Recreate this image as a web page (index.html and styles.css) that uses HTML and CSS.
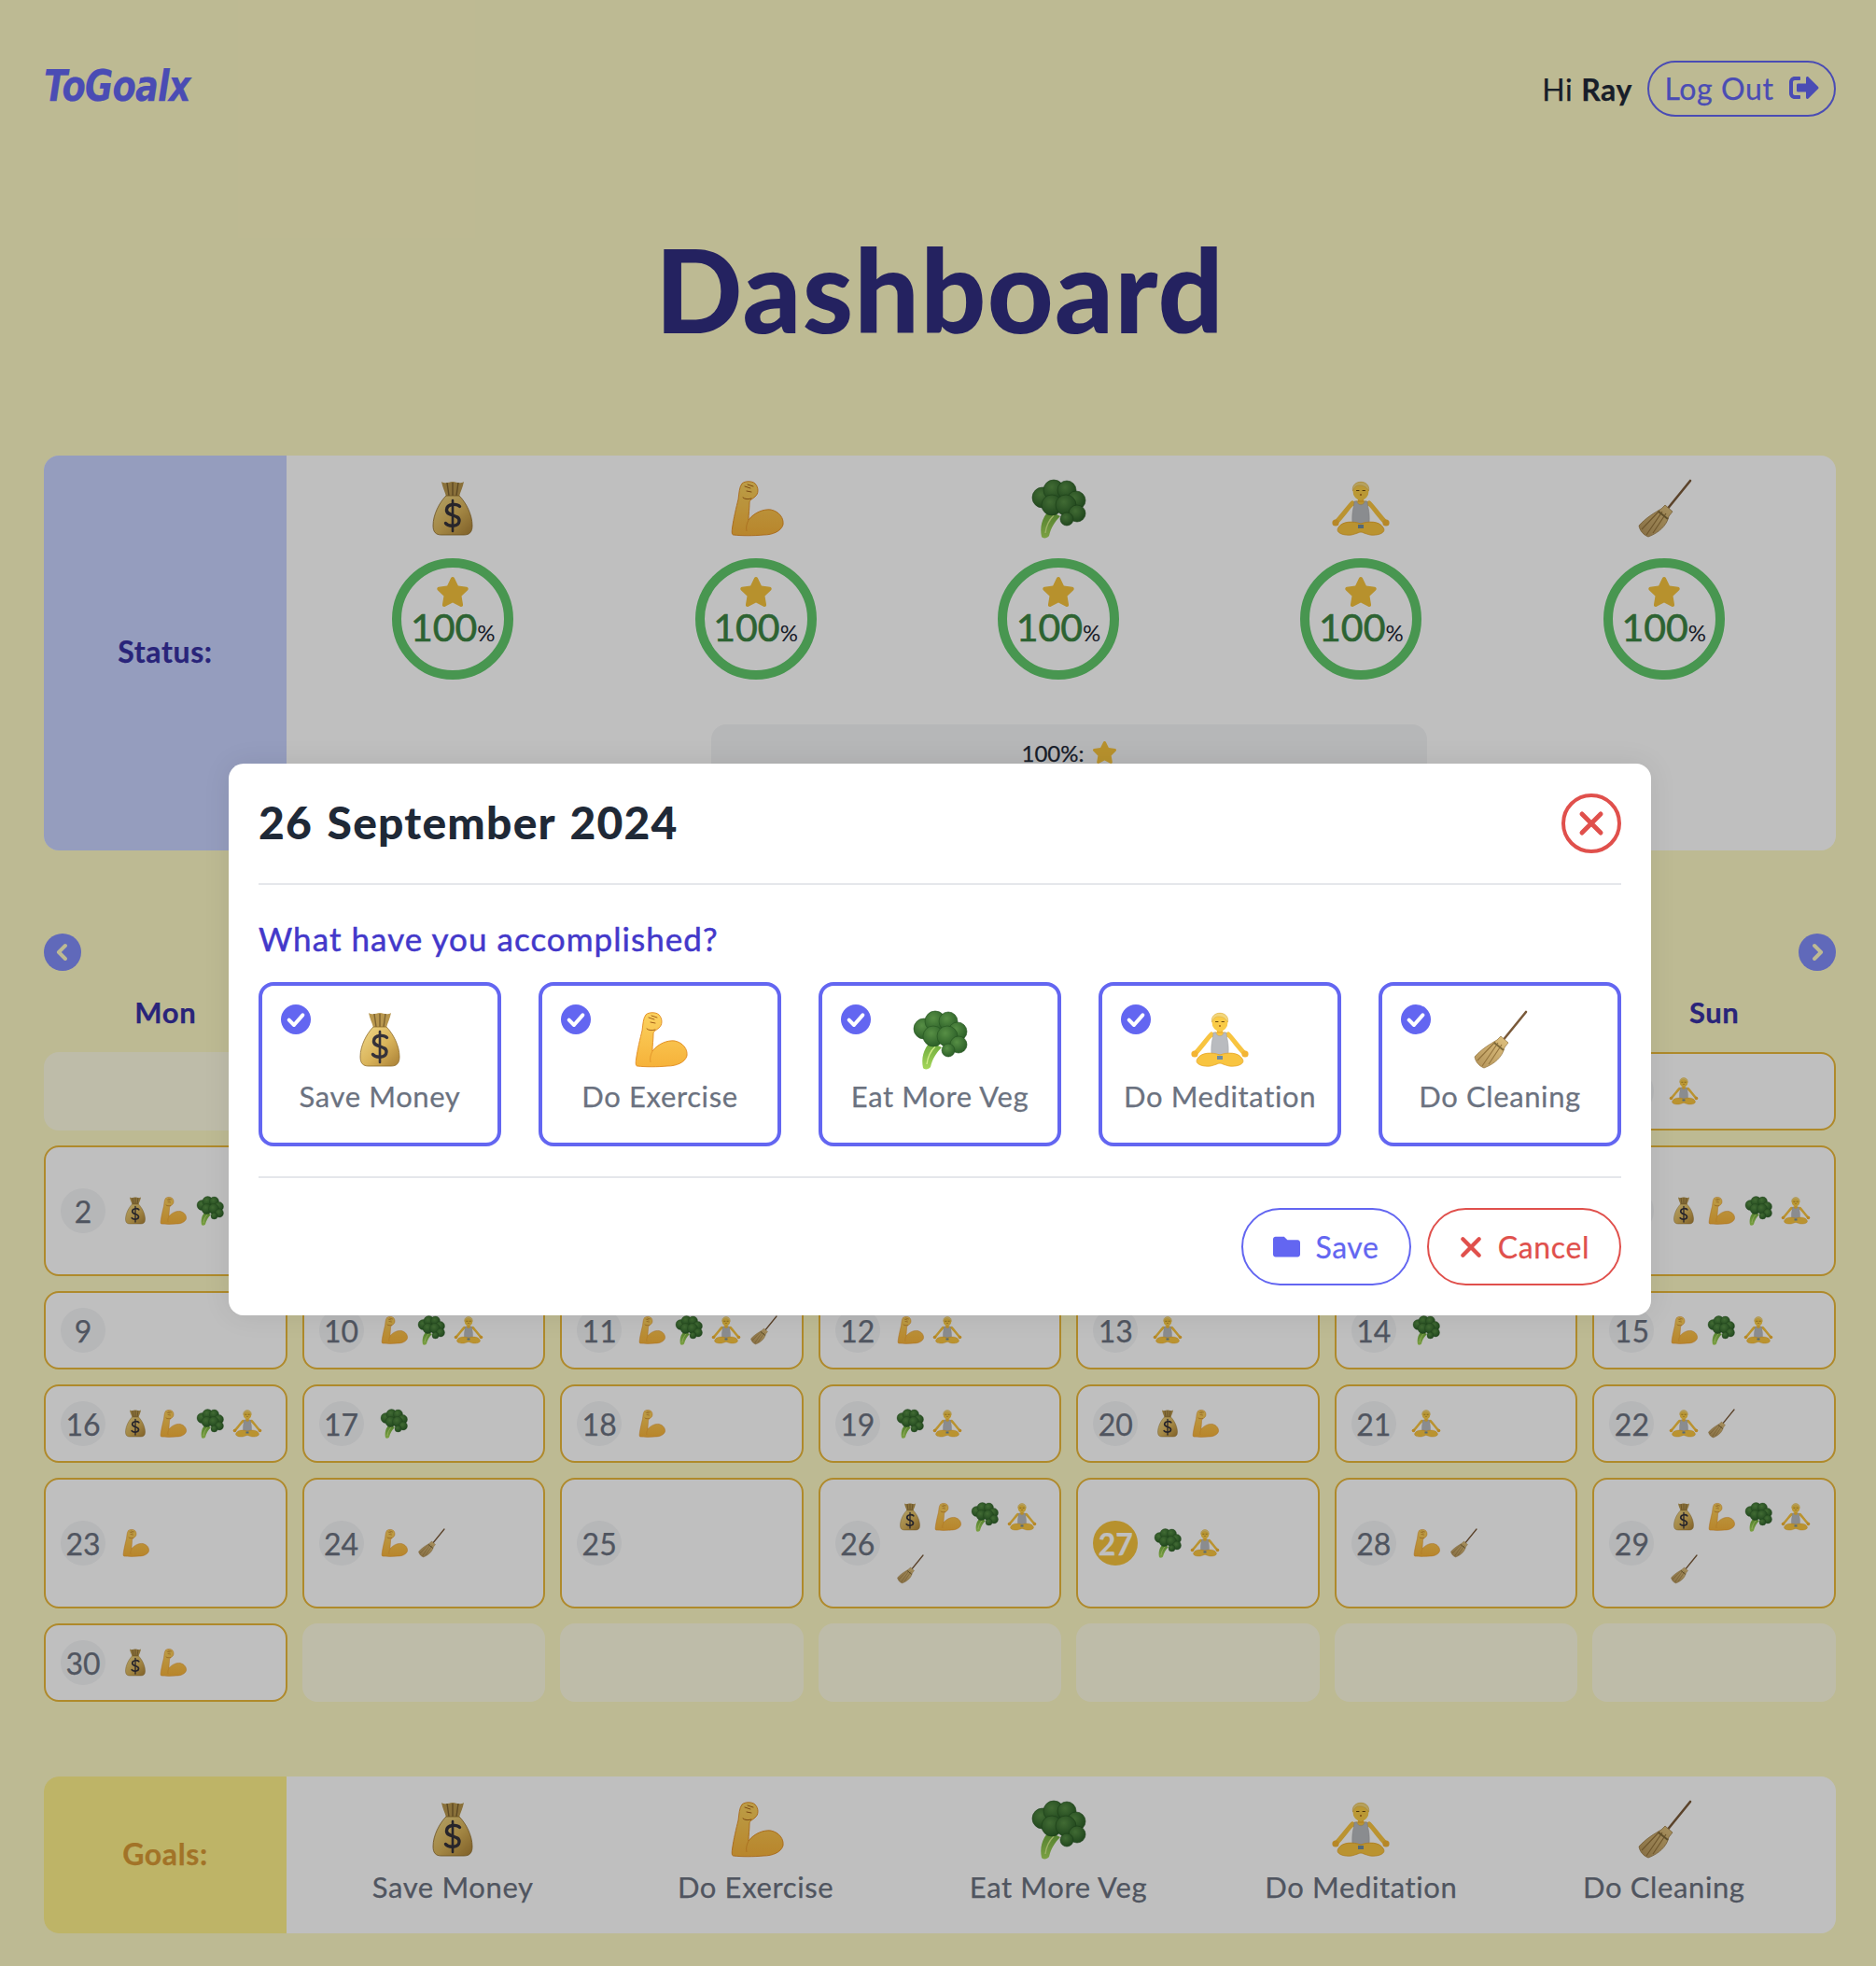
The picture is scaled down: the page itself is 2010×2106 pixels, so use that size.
FILE: index.html
```html
<!DOCTYPE html>
<html>
	<head>
		<meta charset="utf-8" />
		<title>ToGoalx</title>
		<link rel="stylesheet" href="styles.css">
	</head>
	<body>
		<svg class="defs" width="0" height="0">
			<defs>
				<linearGradient id="gBag" x1="0" y1="0" x2="1" y2="1">
					<stop offset="0" stop-color="#f0d98a"/>
					<stop offset="0.55" stop-color="#d9b35a"/>
					<stop offset="1" stop-color="#a87f35"/>
				</linearGradient>
				<linearGradient id="gArm" x1="0" y1="0" x2="0" y2="1">
					<stop offset="0" stop-color="#fbd25f"/>
					<stop offset="1" stop-color="#f6b23a"/>
				</linearGradient>
				<radialGradient id="gFloret" cx="0.4" cy="0.35" r="0.7">
					<stop offset="0" stop-color="#578f45"/>
					<stop offset="1" stop-color="#295c26"/>
				</radialGradient>
				<linearGradient id="gStem" x1="0" y1="0" x2="0" y2="1">
					<stop offset="0" stop-color="#6aa83c"/>
					<stop offset="1" stop-color="#a6d75a"/>
				</linearGradient>
				<linearGradient id="gBroom" x1="1" y1="0" x2="0" y2="1">
					<stop offset="0" stop-color="#e0c27f"/>
					<stop offset="1" stop-color="#b3935a"/>
				</linearGradient>
			</defs>
			<symbol id="e-bag" viewBox="0 0 64 64">
				<path d="M20 3 C25 6 28 3 32 3 C36 3 39 6 44 3 C43 9 40 14 39 19 L25 19 C24 14 21 9 20 3Z" fill="#b8974e"/>
				<path d="M26 4 L28 18 M32 4 L32 18 M38 4 L36 18" stroke="#7d6230" stroke-width="1.4" fill="none"/>
				<path d="M25 18 L39 18 C46 25 53 38 53 50 C53 57 50 60 44 60 L20 60 C14 60 11 57 11 50 C11 38 18 25 25 18Z" fill="url(#gBag)" stroke="#8e6c2c" stroke-width="0.8"/>
				<path d="M39.5 29.5 C37 26.5 26 26 25.5 33 C25 40.5 39.5 37.5 39 45 C38.5 52 27 51 24.5 47.5" fill="none" stroke="#35323a" stroke-width="3.4" stroke-linecap="round"/>
				<path d="M32 23 L32 56" stroke="#35323a" stroke-width="2.6" stroke-linecap="round"/>
			</symbol>
			<symbol id="e-arm" viewBox="0 0 64 64">
				<path d="M17 5 C20 2 28 2 31 5 C35 9 35 16 31 19 C28 22 25 22 25 26 C25 31 24 38 24 44 C30 36 40 32 48 33 C57 35 62 42 61 49 C59 56 50 60 40 60 C30 61 16 61 8 60 C6 60 6 57 6.5 53 C8 42 11 30 13 22 C14 15 14 9 17 5Z" fill="url(#gArm)" stroke="#e08a1e" stroke-width="0.9"/>
				<path d="M20 8 L26 10 M23 6 L29 8 M22 13 L27 14 M18 20 C20 22 24 22 27 21" stroke="#a5611a" stroke-width="1" fill="none" stroke-linecap="round"/>
				<path d="M24 44 C22 48 21 52 22 56" stroke="#e5992c" stroke-width="1" fill="none"/>
			</symbol>
			<symbol id="e-veg" viewBox="0 0 64 64">
				<path d="M14 62 C12 52 14 42 22 34 L34 40 C28 46 24 52 22 61 C20 64 15 64 14 62Z" fill="url(#gStem)"/>
				<path d="M18 58 C19 50 22 44 27 39" stroke="#d2ec8a" stroke-width="1.4" fill="none"/>
				<circle cx="33" cy="22" r="14" fill="#295c26"/>
				<circle cx="15" cy="20" r="11" fill="url(#gFloret)" stroke="#24521f" stroke-width="0.6"/>
				<circle cx="27" cy="12" r="11" fill="url(#gFloret)" stroke="#24521f" stroke-width="0.6"/>
				<circle cx="41" cy="12" r="10" fill="url(#gFloret)" stroke="#24521f" stroke-width="0.6"/>
				<circle cx="51" cy="23" r="10" fill="url(#gFloret)" stroke="#24521f" stroke-width="0.6"/>
				<circle cx="25" cy="28" r="11" fill="url(#gFloret)" stroke="#24521f" stroke-width="0.6"/>
				<circle cx="40" cy="28" r="11" fill="url(#gFloret)" stroke="#24521f" stroke-width="0.6"/>
				<circle cx="52" cy="37" r="9" fill="url(#gFloret)" stroke="#24521f" stroke-width="0.6"/>
				<circle cx="41" cy="43" r="7" fill="url(#gFloret)" stroke="#24521f" stroke-width="0.6"/>
			</symbol>
			<symbol id="e-yoga" viewBox="0 0 64 64">
				<path d="M23 26 C18 31 12 40 6 46 M41 26 C46 31 52 40 58 46" fill="none" stroke="#f8c440" stroke-width="5" stroke-linecap="round"/>
				<circle cx="5" cy="47" r="3.6" fill="#f3b433"/>
				<circle cx="59" cy="47" r="3.6" fill="#f3b433"/>
				<path d="M22 28 C22 24 28 23 32 23 C36 23 42 24 42 28 L32 32Z" fill="#f8c440"/>
				<path d="M25 24 L28 24 C28 29 36 29 36 24 L39 24 C39 30 42 34 41 48 L23 48 C22 34 25 30 25 24Z" fill="#b9bbbf" stroke="#9c9ea3" stroke-width="0.5"/>
				<path d="M8 52 C12 45 24 45 32 48 C40 45 52 45 56 52 C60 58 50 61 42 60 C37 59 34 57 32 57 C30 57 27 59 22 60 C14 61 4 58 8 52Z" fill="#f8c440" stroke="#e3a022" stroke-width="0.7"/>
				<rect x="29" y="49" width="6" height="4" fill="#6f8ba0"/>
				<rect x="29" y="18" width="6" height="7" fill="#f3b433"/>
				<ellipse cx="32" cy="13" rx="8.5" ry="10" fill="#f9cb47"/>
				<path d="M23.5 13 C21 0 43 0 40.5 13 C38 8 34 7 30 7 C27 7 25 9 23.5 13Z" fill="#f3d77c" stroke="#dcb04a" stroke-width="0.6"/>
				<path d="M27.5 12.5 L30 12.5 M34 12.5 L36.5 12.5" stroke="#6a4a12" stroke-width="1" stroke-linecap="round"/>
				<circle cx="32" cy="17" r="1" fill="#a5611a"/>
			</symbol>
			<symbol id="e-broom" viewBox="0 0 64 64">
				<path d="M60 2 L34 34" stroke="#7a5a3a" stroke-width="2.6" stroke-linecap="round"/>
				<path d="M33 28 L41 35 L37 40 C35 50 26 58 15 62 C10 60 6 56 5 50 C12 42 22 36 29 32Z" fill="url(#gBroom)" stroke="#94743f" stroke-width="0.7"/>
				<path d="M30 35 L13 60 M34 37 L20 58 M27 34 L8 54" stroke="#93733c" stroke-width="1.1"/>
				<path d="M26 35 L36 43" stroke="#7f6a3a" stroke-width="2"/>
			</symbol>
			<symbol id="i-star" viewBox="0 0 576 512">
				<path d="M259.3 17.8L194 150.2 47.9 171.5c-26.2 3.8-36.7 36.1-17.7 54.6l105.7 103-25 145.5c-4.5 26.3 23.2 46 46.4 33.7L288 439.6l130.7 68.7c23.2 12.2 50.9-7.4 46.4-33.7l-25-145.5 105.7-103c19-18.5 8.5-50.8-17.7-54.6L382 150.2 316.7 17.8c-11.7-23.6-45.6-23.9-57.4 0z"/>
			</symbol>
		</svg>

		<div class="page">
			<header class="top">
				<div class="logo">ToGoalx</div>
				<div class="user">
					<span class="hi">Hi <b>Ray</b></span>
					<a class="btn-logout">Log Out
						<svg viewBox="0 0 512 512"><path d="M497 273L329 441c-15 15-41 4.5-41-17v-96H152c-13.3 0-24-10.7-24-24v-96c0-13.3 10.7-24 24-24h136V88c0-21.4 25.9-32 41-17l168 168c9.3 9.4 9.3 24.6 0 34zM192 436v-40c0-6.6-5.4-12-12-12H96c-17.7 0-32-14.3-32-32V160c0-17.7 14.3-32 32-32h84c6.6 0 12-5.4 12-12V76c0-6.6-5.4-12-12-12H96c-53 0-96 43-96 96v192c0 53 43 96 96 96h84c6.6 0 12-5.4 12-12z"/></svg>
					</a>
				</div>
			</header>

			<h1 class="title">Dashboard</h1>

			<section class="panel status">
				<div class="panel-label status-label">Status:</div>
				<div class="panel-body">
					<div class="goal-row">
						<div class="stat"><svg class="emoji"><use href="#e-bag"/></svg><div class="ring"><svg class="star"><use href="#i-star"/></svg><div class="pct">100<small>%</small></div></div></div>
						<div class="stat"><svg class="emoji"><use href="#e-arm"/></svg><div class="ring"><svg class="star"><use href="#i-star"/></svg><div class="pct">100<small>%</small></div></div></div>
						<div class="stat"><svg class="emoji"><use href="#e-veg"/></svg><div class="ring"><svg class="star"><use href="#i-star"/></svg><div class="pct">100<small>%</small></div></div></div>
						<div class="stat"><svg class="emoji"><use href="#e-yoga"/></svg><div class="ring"><svg class="star"><use href="#i-star"/></svg><div class="pct">100<small>%</small></div></div></div>
						<div class="stat"><svg class="emoji"><use href="#e-broom"/></svg><div class="ring"><svg class="star"><use href="#i-star"/></svg><div class="pct">100<small>%</small></div></div></div>
					</div>
					<div class="legend">100%: <svg class="legend-star"><use href="#i-star"/></svg></div>
				</div>
			</section>

			<section class="calendar">
				<div class="cal-nav">
					<button class="arrow"><svg viewBox="0 0 24 24"><path d="M14.5 6 L8.5 12 L14.5 18"/></svg></button>
					<div class="month">September 2024</div>
					<button class="arrow"><svg viewBox="0 0 24 24"><path d="M9.5 6 L15.5 12 L9.5 18"/></svg></button>
				</div>
				<div class="week-head">
					<div>Mon</div><div>Tue</div><div>Wed</div><div>Thu</div><div>Fri</div><div>Sat</div><div>Sun</div>
				</div>
				<div class="days">
					<div class="day empty"></div>
					<div class="day empty"></div>
					<div class="day empty"></div>
					<div class="day empty"></div>
					<div class="day empty"></div>
					<div class="day empty"></div>
					<div class="day"><span class="num">1</span><div class="marks"><svg><use href="#e-yoga"/></svg></div></div>

					<div class="day"><span class="num">2</span><div class="marks"><svg><use href="#e-bag"/></svg><svg><use href="#e-arm"/></svg><svg><use href="#e-veg"/></svg></div></div>
					<div class="day"><span class="num">3</span><div class="marks"><svg><use href="#e-bag"/></svg><svg><use href="#e-arm"/></svg><svg><use href="#e-veg"/></svg><svg><use href="#e-yoga"/></svg><svg><use href="#e-broom"/></svg></div></div>
					<div class="day"><span class="num">4</span><div class="marks"><svg><use href="#e-arm"/></svg></div></div>
					<div class="day"><span class="num">5</span><div class="marks"><svg><use href="#e-veg"/></svg></div></div>
					<div class="day"><span class="num">6</span><div class="marks"><svg><use href="#e-bag"/></svg></div></div>
					<div class="day"><span class="num">7</span><div class="marks"><svg><use href="#e-yoga"/></svg></div></div>
					<div class="day"><span class="num">8</span><div class="marks"><svg><use href="#e-bag"/></svg><svg><use href="#e-arm"/></svg><svg><use href="#e-veg"/></svg><svg><use href="#e-yoga"/></svg></div></div>

					<div class="day"><span class="num">9</span></div>
					<div class="day"><span class="num">10</span><div class="marks"><svg><use href="#e-arm"/></svg><svg><use href="#e-veg"/></svg><svg><use href="#e-yoga"/></svg></div></div>
					<div class="day"><span class="num">11</span><div class="marks"><svg><use href="#e-arm"/></svg><svg><use href="#e-veg"/></svg><svg><use href="#e-yoga"/></svg><svg><use href="#e-broom"/></svg></div></div>
					<div class="day"><span class="num">12</span><div class="marks"><svg><use href="#e-arm"/></svg><svg><use href="#e-yoga"/></svg></div></div>
					<div class="day"><span class="num">13</span><div class="marks"><svg><use href="#e-yoga"/></svg></div></div>
					<div class="day"><span class="num">14</span><div class="marks"><svg><use href="#e-veg"/></svg></div></div>
					<div class="day"><span class="num">15</span><div class="marks"><svg><use href="#e-arm"/></svg><svg><use href="#e-veg"/></svg><svg><use href="#e-yoga"/></svg></div></div>

					<div class="day"><span class="num">16</span><div class="marks"><svg><use href="#e-bag"/></svg><svg><use href="#e-arm"/></svg><svg><use href="#e-veg"/></svg><svg><use href="#e-yoga"/></svg></div></div>
					<div class="day"><span class="num">17</span><div class="marks"><svg><use href="#e-veg"/></svg></div></div>
					<div class="day"><span class="num">18</span><div class="marks"><svg><use href="#e-arm"/></svg></div></div>
					<div class="day"><span class="num">19</span><div class="marks"><svg><use href="#e-veg"/></svg><svg><use href="#e-yoga"/></svg></div></div>
					<div class="day"><span class="num">20</span><div class="marks"><svg><use href="#e-bag"/></svg><svg><use href="#e-arm"/></svg></div></div>
					<div class="day"><span class="num">21</span><div class="marks"><svg><use href="#e-yoga"/></svg></div></div>
					<div class="day"><span class="num">22</span><div class="marks"><svg><use href="#e-yoga"/></svg><svg><use href="#e-broom"/></svg></div></div>

					<div class="day"><span class="num">23</span><div class="marks"><svg><use href="#e-arm"/></svg></div></div>
					<div class="day"><span class="num">24</span><div class="marks"><svg><use href="#e-arm"/></svg><svg><use href="#e-broom"/></svg></div></div>
					<div class="day"><span class="num">25</span></div>
					<div class="day"><span class="num">26</span><div class="marks"><svg><use href="#e-bag"/></svg><svg><use href="#e-arm"/></svg><svg><use href="#e-veg"/></svg><svg><use href="#e-yoga"/></svg><svg><use href="#e-broom"/></svg></div></div>
					<div class="day"><span class="num today">27</span><div class="marks"><svg><use href="#e-veg"/></svg><svg><use href="#e-yoga"/></svg></div></div>
					<div class="day"><span class="num">28</span><div class="marks"><svg><use href="#e-arm"/></svg><svg><use href="#e-broom"/></svg></div></div>
					<div class="day"><span class="num">29</span><div class="marks"><svg><use href="#e-bag"/></svg><svg><use href="#e-arm"/></svg><svg><use href="#e-veg"/></svg><svg><use href="#e-yoga"/></svg><svg><use href="#e-broom"/></svg></div></div>

					<div class="day"><span class="num">30</span><div class="marks"><svg><use href="#e-bag"/></svg><svg><use href="#e-arm"/></svg></div></div>
					<div class="day empty"></div>
					<div class="day empty"></div>
					<div class="day empty"></div>
					<div class="day empty"></div>
					<div class="day empty"></div>
					<div class="day empty"></div>
				</div>
			</section>

			<section class="panel goals">
				<div class="panel-label goals-label">Goals:</div>
				<div class="panel-body">
					<div class="goal-row">
						<div class="goal"><svg class="emoji"><use href="#e-bag"/></svg><span>Save Money</span></div>
						<div class="goal"><svg class="emoji"><use href="#e-arm"/></svg><span>Do Exercise</span></div>
						<div class="goal"><svg class="emoji"><use href="#e-veg"/></svg><span>Eat More Veg</span></div>
						<div class="goal"><svg class="emoji"><use href="#e-yoga"/></svg><span>Do Meditation</span></div>
						<div class="goal"><svg class="emoji"><use href="#e-broom"/></svg><span>Do Cleaning</span></div>
					</div>
				</div>
			</section>
		</div>

		<div class="overlay"></div>

		<div class="modal">
			<div class="modal-head">
				<h2>26 September 2024</h2>
				<button class="close"><svg viewBox="0 0 24 24"><path d="M6 6 L18 18 M18 6 L6 18"/></svg></button>
			</div>
			<h3>What have you accomplished?</h3>
			<div class="choices">
				<label class="choice"><span class="tick"><svg viewBox="0 0 24 24"><path d="M6.5 12.5 L10.5 16.5 L17.5 8.5"/></svg></span><svg class="emoji"><use href="#e-bag"/></svg><span>Save Money</span></label>
				<label class="choice"><span class="tick"><svg viewBox="0 0 24 24"><path d="M6.5 12.5 L10.5 16.5 L17.5 8.5"/></svg></span><svg class="emoji"><use href="#e-arm"/></svg><span>Do Exercise</span></label>
				<label class="choice"><span class="tick"><svg viewBox="0 0 24 24"><path d="M6.5 12.5 L10.5 16.5 L17.5 8.5"/></svg></span><svg class="emoji"><use href="#e-veg"/></svg><span>Eat More Veg</span></label>
				<label class="choice"><span class="tick"><svg viewBox="0 0 24 24"><path d="M6.5 12.5 L10.5 16.5 L17.5 8.5"/></svg></span><svg class="emoji"><use href="#e-yoga"/></svg><span>Do Meditation</span></label>
				<label class="choice"><span class="tick"><svg viewBox="0 0 24 24"><path d="M6.5 12.5 L10.5 16.5 L17.5 8.5"/></svg></span><svg class="emoji"><use href="#e-broom"/></svg><span>Do Cleaning</span></label>
			</div>
			<div class="modal-foot">
				<button class="btn btn-save"><svg viewBox="0 0 512 512"><path d="M464 128H272l-64-64H48C21.49 64 0 85.49 0 112v288c0 26.51 21.49 48 48 48h416c26.51 0 48-21.49 48-48V176c0-26.51-21.49-48-48-48z"/></svg>Save</button>
				<button class="btn btn-cancel"><svg class="x" viewBox="0 0 24 24"><path d="M4 4 L20 20 M20 4 L4 20"/></svg>Cancel</button>
			</div>
		</div>
	</body>
</html>
```

FILE: styles.css
```css
*{
	margin: 0;
	padding: 0;
	box-sizing: border-box;
}

body{
	position: relative;
	width: 2010px;
	height: 2106px;
	overflow: hidden;
	background: #fdf8c4;
	font-family: "Lato", "Open Sans", sans-serif;
	font-size: 31px;
	letter-spacing: 0.02em;
	-webkit-text-stroke: 0.25px;
	color: #1f2937;
}

.defs{
	position: absolute;
}

.page{
	padding: 65px 43px 0 47px;
}

/* header */
.top{
	display: flex;
	justify-content: space-between;
	align-items: center;
	height: 60px;
}

.logo{
	margin-top: -6px;
	font-family: "DejaVu Sans", sans-serif;
	font-weight: bold;
	font-style: italic;
	font-size: 46px;
	letter-spacing: -1px;
	color: #6366f1;
	transform: scaleX(0.8);
	transform-origin: left center;
}

.user{
	display: flex;
	align-items: center;
	gap: 16px;
}

.hi{
	font-size: 32px;
}

.btn-logout{
	display: flex;
	align-items: center;
	justify-content: center;
	gap: 16px;
	width: 202px;
	height: 60px;
	padding-bottom: 2px;
	border: 2px solid #6366f1;
	border-radius: 30px;
	color: #6366f1;
	font-size: 32px;
}

.btn-logout svg{
	width: 32px;
	height: 32px;
	fill: #6366f1;
}

.title{
	height: 363px;
	padding-top: 123px;
	font-size: 123px;
	line-height: 1;
	font-weight: 900;
	letter-spacing: 0.01em;
	-webkit-text-stroke: 0;
	text-align: center;
	color: #312e81;
}

/* status + goals panels */
.panel{
	display: flex;
	background: #fff;
	border-radius: 16px;
	overflow: hidden;
}

.panel-label{
	flex: 0 0 260px;
	display: flex;
	align-items: center;
	justify-content: center;
	padding-bottom: 4px;
	font-size: 32px;
	font-weight: bold;
}

.status{
	height: 423px;
}

.status-label{
	background: #c7d2fe;
	color: #3730a3;
}

.goals{
	height: 168px;
	margin-top: 80px;
}

.goals-label{
	background: #fef08a;
	color: #d99a35;
}

.panel-body{
	flex: 1;
	padding: 25px 22px 0 16px;
}

.goal-row{
	display: grid;
	grid-template-columns: repeat(5, 1fr);
}

.emoji{
	display: block;
	width: 64px;
	height: 64px;
}

.stat{
	display: flex;
	flex-direction: column;
	align-items: center;
	gap: 21px;
}

.ring{
	width: 130px;
	height: 130px;
	border: 10px solid #60c86b;
	border-radius: 50%;
	display: flex;
	flex-direction: column;
	align-items: center;
	padding-top: 10px;
}

.star{
	width: 36px;
	height: 32px;
	fill: #f4c23c;
	flex: none;
}

.pct{
	margin-top: 3px;
	font-size: 41px;
	line-height: 38px;
	letter-spacing: 0;
	-webkit-text-stroke: 0.6px;
	color: #3c8543;
	white-space: nowrap;
}

.pct small{
	font-size: 24px;
	-webkit-text-stroke: 0;
	color: #1f2937;
}

.legend{
	display: flex;
	align-items: center;
	justify-content: center;
	gap: 8px;
	width: 767px;
	height: 120px;
	margin: 48px 0 0 439px;
	padding-bottom: 60px;
	background: #f3f4f6;
	border-radius: 16px;
	font-size: 24px;
	letter-spacing: 0;
}

.legend-star{
	width: 27px;
	height: 24px;
	fill: #f4c23c;
}

/* calendar */
.calendar{
	margin-top: 89px;
}

.cal-nav{
	display: flex;
	justify-content: space-between;
	align-items: center;
	height: 40px;
}

.arrow{
	width: 40px;
	height: 40px;
	border: 0;
	border-radius: 50%;
	background: #818cf8;
	display: flex;
	align-items: center;
	justify-content: center;
}

.arrow svg{
	width: 28px;
	height: 28px;
	fill: none;
	stroke: #fdf8c4;
	stroke-width: 3.4;
	stroke-linecap: round;
	stroke-linejoin: round;
}

.month{
	font-size: 36px;
	font-weight: bold;
	color: #3730a3;
}

.week-head{
	display: grid;
	grid-template-columns: repeat(7, 1fr);
	gap: 16px;
	height: 87px;
	align-items: center;
	text-align: center;
	font-weight: bold;
	color: #3730a3;
}

.days{
	display: grid;
	grid-template-columns: repeat(7, 1fr);
	gap: 16px;
}

.day{
	display: flex;
	align-items: center;
	gap: 16px;
	min-height: 84px;
	padding: 16px;
	background: #fff;
	border: 2px solid #eab83a;
	border-radius: 16px;
}

.day.empty{
	background: #fefbe2;
	border-color: transparent;
}

.num{
	flex: none;
	display: flex;
	align-items: center;
	justify-content: center;
	width: 48px;
	height: 48px;
	border-radius: 50%;
	background: #f3f4f6;
	color: #6b7280;
	font-size: 32px;
	letter-spacing: 0;
}

.num.today{
	background: #f4c23c;
	color: #fff;
	font-weight: bold;
}

.marks{
	display: flex;
	flex-wrap: wrap;
	gap: 8px;
}

.marks svg{
	display: block;
	width: 32px;
	height: 48px;
}

.goal{
	display: flex;
	flex-direction: column;
	align-items: center;
	gap: 10px;
	color: #6b7280;
}

/* modal */
.overlay{
	position: absolute;
	inset: 0;
	background: rgba(0, 0, 0, 0.25);
}

.modal{
	position: absolute;
	left: 245px;
	top: 818px;
	width: 1524px;
	height: 591px;
	padding: 32px;
	background: #fff;
	border-radius: 16px;
	box-shadow: 0 0 30px rgba(0, 0, 0, 0.08);
}

.modal-head{
	display: flex;
	justify-content: space-between;
	align-items: center;
	padding-bottom: 32px;
	border-bottom: 2px solid #e5e7eb;
}

.modal-head h2{
	margin-top: -3px;
	font-size: 48px;
	font-weight: 900;
	word-spacing: 0.06em;
	letter-spacing: 0.025em;
	-webkit-text-stroke: 0;
	color: #1f2937;
}

.close{
	width: 64px;
	height: 64px;
	border: 4px solid #e0504c;
	border-radius: 50%;
	background: #fff;
	display: flex;
	align-items: center;
	justify-content: center;
}

.close svg{
	width: 40px;
	height: 40px;
	fill: none;
	stroke: #e0504c;
	stroke-width: 3;
	stroke-linecap: round;
}

.modal h3{
	margin-top: 35px;
	font-size: 35px;
	line-height: 44px;
	font-weight: 400;
	letter-spacing: 0.03em;
	-webkit-text-stroke: 0.5px;
	color: #4338ca;
}

.choices{
	display: grid;
	grid-template-columns: repeat(5, 260px);
	gap: 40px;
	margin-top: 25px;
	padding-bottom: 32px;
	border-bottom: 2px solid #e5e7eb;
}

.choice{
	position: relative;
	display: flex;
	flex-direction: column;
	align-items: center;
	gap: 9px;
	height: 176px;
	padding-top: 26px;
	border: 4px solid #6366f1;
	border-radius: 16px;
	color: #6b7280;
}

.tick{
	position: absolute;
	left: 20px;
	top: 20px;
	width: 32px;
	height: 32px;
	border-radius: 50%;
	background: #6366f1;
}

.tick svg{
	display: block;
	fill: none;
	stroke: #fff;
	stroke-width: 3;
	stroke-linecap: round;
	stroke-linejoin: round;
}

.modal-foot{
	display: flex;
	justify-content: flex-end;
	gap: 17px;
	margin-top: 32px;
}

.btn{
	display: flex;
	align-items: center;
	justify-content: center;
	gap: 16px;
	height: 83px;
	border-radius: 42px;
	background: #fff;
	font-family: inherit;
	font-size: 32px;
	letter-spacing: inherit;
}

.btn svg{
	width: 29px;
	height: 29px;
	fill: currentColor;
}

.btn-save{
	width: 182px;
	border: 2px solid #6366f1;
	color: #6366f1;
}

.btn-cancel{
	width: 208px;
	border: 2px solid #e0504c;
	color: #e0504c;
}

.btn .x{
	width: 26px;
	height: 26px;
	fill: none;
	stroke: currentColor;
	stroke-width: 4;
	stroke-linecap: round;
}
```
